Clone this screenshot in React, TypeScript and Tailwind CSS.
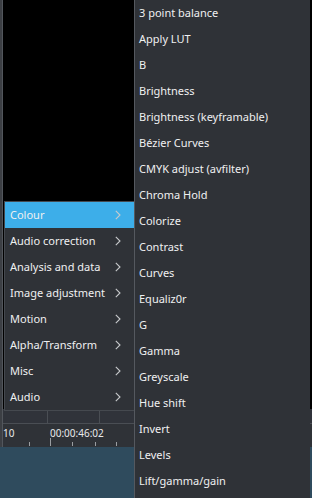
const mainItems = [
  'Colour',
  'Audio correction',
  'Analysis and data',
  'Image adjustment',
  'Motion',
  'Alpha/Transform',
  'Misc',
  'Audio',
];

const subItems = [
  '3 point balance',
  'Apply LUT',
  'B',
  'Brightness',
  'Brightness (keyframable)',
  'Bézier Curves',
  'CMYK adjust (avfilter)',
  'Chroma Hold',
  'Colorize',
  'Contrast',
  'Curves',
  'Equaliz0r',
  'G',
  'Gamma',
  'Greyscale',
  'Hue shift',
  'Invert',
  'Levels',
  'Lift/gamma/gain',
];

function Chevron() {
  return (
    <svg width="6" height="10" viewBox="0 0 6 10" className="shrink-0">
      <path d="M0.8 0.8 L5 5 L0.8 9.2" fill="none" stroke="#c8cacc" strokeWidth="1.1" />
    </svg>
  );
}

function Ruler() {
  const ticks = [26, 47, 69, 92, 113];
  return (
    <div className="relative h-[24px] bg-[#2f3237] border-t border-[#4a4e54]">
      <span className="absolute left-0 top-[2px] text-[10px] text-[#e8e9ea]">10</span>
      <span className="absolute left-[47px] top-[2px] text-[10px] text-[#e8e9ea]">00:00:46:02</span>
      {ticks.map((x) => (
        <div key={x} className="absolute bottom-[1px] w-px h-[4px] bg-[#9a9da1]" style={{ left: x }} />
      ))}
      <div className="absolute bottom-[1px] left-[47px] w-px h-[8px] bg-[#9a9da1]" />
    </div>
  );
}

export default function App() {
  return (
    <div
      className="relative w-[312px] h-[498px] overflow-hidden bg-[#2b2e33] text-[#eff0f1]"
      style={{ fontFamily: '"Noto Sans", "Open Sans", sans-serif' }}
    >
      {/* background application */}
      <div className="flex flex-col h-full">
        <div className="flex h-[447px]">
          <div className="w-[3px] bg-[#3c3f44] border-r border-[#52565c]" />
          <div className="flex-1 flex flex-col">
            <div className="h-[409px] bg-black" />
            <div className="h-[14px] bg-[#30333a] flex">
              <div className="w-[45px] border-r border-[#4a4e54]" />
              <div className="w-[52px] border-r border-[#4a4e54]" />
            </div>
            <Ruler />
          </div>
        </div>
        <div className="flex-1 bg-[#2f4b5d]" />
      </div>

      {/* main menu */}
      <div className="absolute left-[4px] top-[201px] w-[131px] bg-[#2f3237] border border-[#45494f] flex flex-col">
        {mainItems.map((item, i) => (
          <div
            key={item}
            className={`h-[26px] flex items-center justify-between pl-[5px] pr-[13px] text-[11px] ${
              i === 0 ? 'bg-[#3daee9]' : ''
            }`}
          >
            <span>{item}</span>
            <Chevron />
          </div>
        ))}
      </div>

      {/* submenu */}
      <div className="absolute left-[134px] top-0 w-[176px] h-[498px] bg-[#2f3237] border-l border-[#55595f] flex flex-col">
        {subItems.map((item) => (
          <div key={item} className="h-[26px] shrink-0 flex items-center pl-[4px] text-[11px]">
            {item}
          </div>
        ))}
      </div>
    </div>
  );
}
